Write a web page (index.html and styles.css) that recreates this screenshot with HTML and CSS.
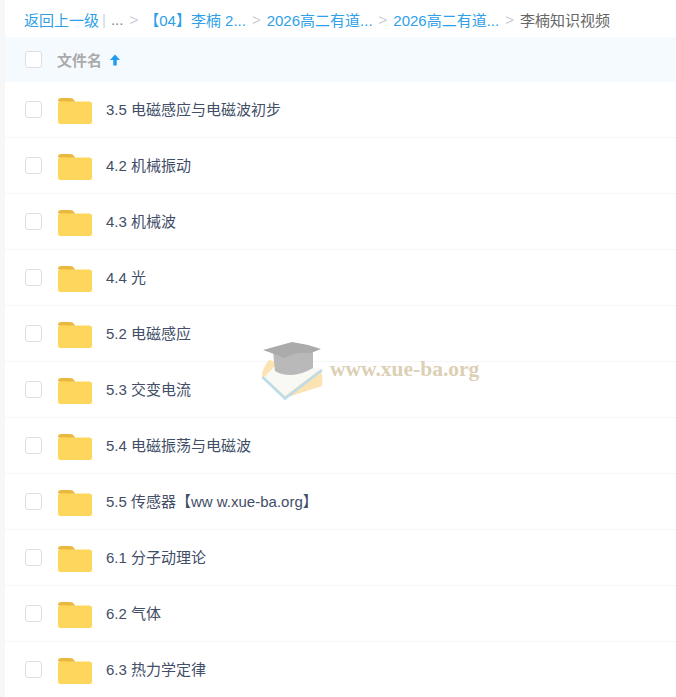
FILE: index.html
```html
<!DOCTYPE html>
<html>

<head>
  <title>文件列表</title>
  <link rel="stylesheet" href="styles.css">
</head>

<body>
  <div class="page">
    <div class="crumbs">
      <a class="crumb-back">返回上一级</a>
      <span class="crumb-bar">|</span>
      <span class="crumb-more">...</span>
      <span class="crumb-sep">&gt;</span>
      <a class="crumb-link">【04】李楠 2...</a>
      <span class="crumb-sep">&gt;</span>
      <a class="crumb-link">2026高二有道...</a>
      <span class="crumb-sep">&gt;</span>
      <a class="crumb-link">2026高二有道...</a>
      <span class="crumb-sep">&gt;</span>
      <span class="crumb-current">李楠知识视频</span>
    </div>

    <div class="list-head">
      <span class="check"></span>
      <span class="head-name">文件名</span>
      <svg class="sort-icon" width="10" height="12" viewBox="0 0 10 12">
        <path d="M5 0.500 L10 6 H6.700 V11.500 H3.300 V6 H0 Z" fill="#1E9BEA"/>
      </svg>
    </div>

    <ul class="file-list">
      <li class="file-row"><span class="check"></span><svg class="folder" viewBox="0 0 34 26"><use href="#folder"/></svg><span class="file-name">3.5 电磁感应与电磁波初步</span></li>
      <li class="file-row"><span class="check"></span><svg class="folder" viewBox="0 0 34 26"><use href="#folder"/></svg><span class="file-name">4.2 机械振动</span></li>
      <li class="file-row"><span class="check"></span><svg class="folder" viewBox="0 0 34 26"><use href="#folder"/></svg><span class="file-name">4.3 机械波</span></li>
      <li class="file-row"><span class="check"></span><svg class="folder" viewBox="0 0 34 26"><use href="#folder"/></svg><span class="file-name">4.4 光</span></li>
      <li class="file-row"><span class="check"></span><svg class="folder" viewBox="0 0 34 26"><use href="#folder"/></svg><span class="file-name">5.2 电磁感应</span></li>
      <li class="file-row"><span class="check"></span><svg class="folder" viewBox="0 0 34 26"><use href="#folder"/></svg><span class="file-name">5.3 交变电流</span></li>
      <li class="file-row"><span class="check"></span><svg class="folder" viewBox="0 0 34 26"><use href="#folder"/></svg><span class="file-name">5.4 电磁振荡与电磁波</span></li>
      <li class="file-row"><span class="check"></span><svg class="folder" viewBox="0 0 34 26"><use href="#folder"/></svg><span class="file-name">5.5 传感器【ww w.xue-ba.org】</span></li>
      <li class="file-row"><span class="check"></span><svg class="folder" viewBox="0 0 34 26"><use href="#folder"/></svg><span class="file-name">6.1 分子动理论</span></li>
      <li class="file-row"><span class="check"></span><svg class="folder" viewBox="0 0 34 26"><use href="#folder"/></svg><span class="file-name">6.2 气体</span></li>
      <li class="file-row"><span class="check"></span><svg class="folder" viewBox="0 0 34 26"><use href="#folder"/></svg><span class="file-name">6.3 热力学定律</span></li>
    </ul>

    <!-- watermark sits over the list -->
    <div class="watermark">
      <svg class="wm-logo" width="62" height="60" viewBox="0 0 62 60">
        <path d="M8 19 Q0 29 1 37 L24 57 L61 45 Q62 36 60 30 Z" fill="#FBE3B2"/>
        <path d="M13 26 L61 27 L24 55 L3 36 Z" fill="#F8F8F4"/>
        <path d="M1.500 36 L24 57.500 L61 29" fill="none" stroke="#BCDCEC" stroke-width="2.500"/>
        <path d="M12 10 H52 V27 Q40 34 30 34 Q20 34 14 30 Z" fill="#B9B9B9"/>
        <path d="M2 9 L31 1 Q46 3 60 8 L50 12 Q32 11 24 17 Z" fill="#ABABAB"/>
      </svg>
      <span class="wm-text">www.xue-ba.org</span>
    </div>
  </div>

  <svg class="defs" width="0" height="0">
    <defs>
      <g id="folder">
        <path d="M0 3 Q0 0 3 0 H12 Q15 0 16 2 L17 4 H2 Z" fill="#E9B93F"/>
        <path d="M0 5 Q0 3.500 2 3.500 H31.500 Q34 3.500 34 6 V23.500 Q34 26 31.500 26 H2.500 Q0 26 0 23.500 Z" fill="#FFD65C"/>
      </g>
    </defs>
  </svg>
</body>

</html>
```

FILE: styles.css
```css
/* styles.css */
body {
  margin: 0;
  font-family: "Liberation Sans", Arial, "Noto Sans CJK SC", sans-serif;
  font-size: 15px;
  color: #424E67;
  background-color: #F7F7F7;
}

/* Page */
.page {
  position: relative;
  margin-left: 5px;
  height: 697px;
  overflow: hidden;
  background-color: #FFFFFF;
}

/* Breadcrumb */
.crumbs {
  display: flex;
  align-items: center;
  height: 37px;
  padding-left: 19px;
  padding-top: 2px;
  box-sizing: border-box;
  white-space: nowrap;
}

.crumb-back,
.crumb-link {
  color: #2E9FE8;
}

.crumb-bar {
  margin: 0 5px 0 3px;
  color: #C9D4E0;
}

.crumb-more {
  color: #7A8594;
}

.crumb-sep {
  margin: 0 6px;
  color: #C7CDD6;
}

.crumb-current {
  color: #666666;
}

/* List head */
.list-head {
  display: flex;
  align-items: center;
  height: 45px;
  padding-left: 20px;
  background-color: #F5FAFF;
}

.head-name {
  margin-left: 15px;
  font-weight: bold;
  color: #AAAAAA;
}

.sort-icon {
  margin-left: 8px;
}

/* Check box */
.check {
  display: block;
  flex: none;
  width: 15px;
  height: 15px;
  border: 1px solid #DDDFE3;
  border-radius: 3px;
  background-color: #FFFFFF;
}

/* File list */
.file-list {
  list-style: none;
  margin: 0;
  padding: 0;
}

.file-row {
  display: flex;
  align-items: center;
  height: 55px;
  padding-left: 20px;
  border-bottom: 1px solid #F5F6F7;
}

.folder {
  flex: none;
  width: 34px;
  height: 26px;
  margin: 2px 0 0 16px;
}

.file-name {
  margin-left: 14px;
  padding-bottom: 2px;
}

/* Watermark */
.watermark {
  position: absolute;
  left: 256px;
  top: 341px;
  display: flex;
  align-items: center;
  gap: 7px;
}

.wm-text {
  margin-top: -3px;
  font-family: "Liberation Serif", serif;
  font-size: 21.500px;
  font-weight: bold;
  color: #DCD0B4;
}

.defs {
  position: absolute;
}
```
